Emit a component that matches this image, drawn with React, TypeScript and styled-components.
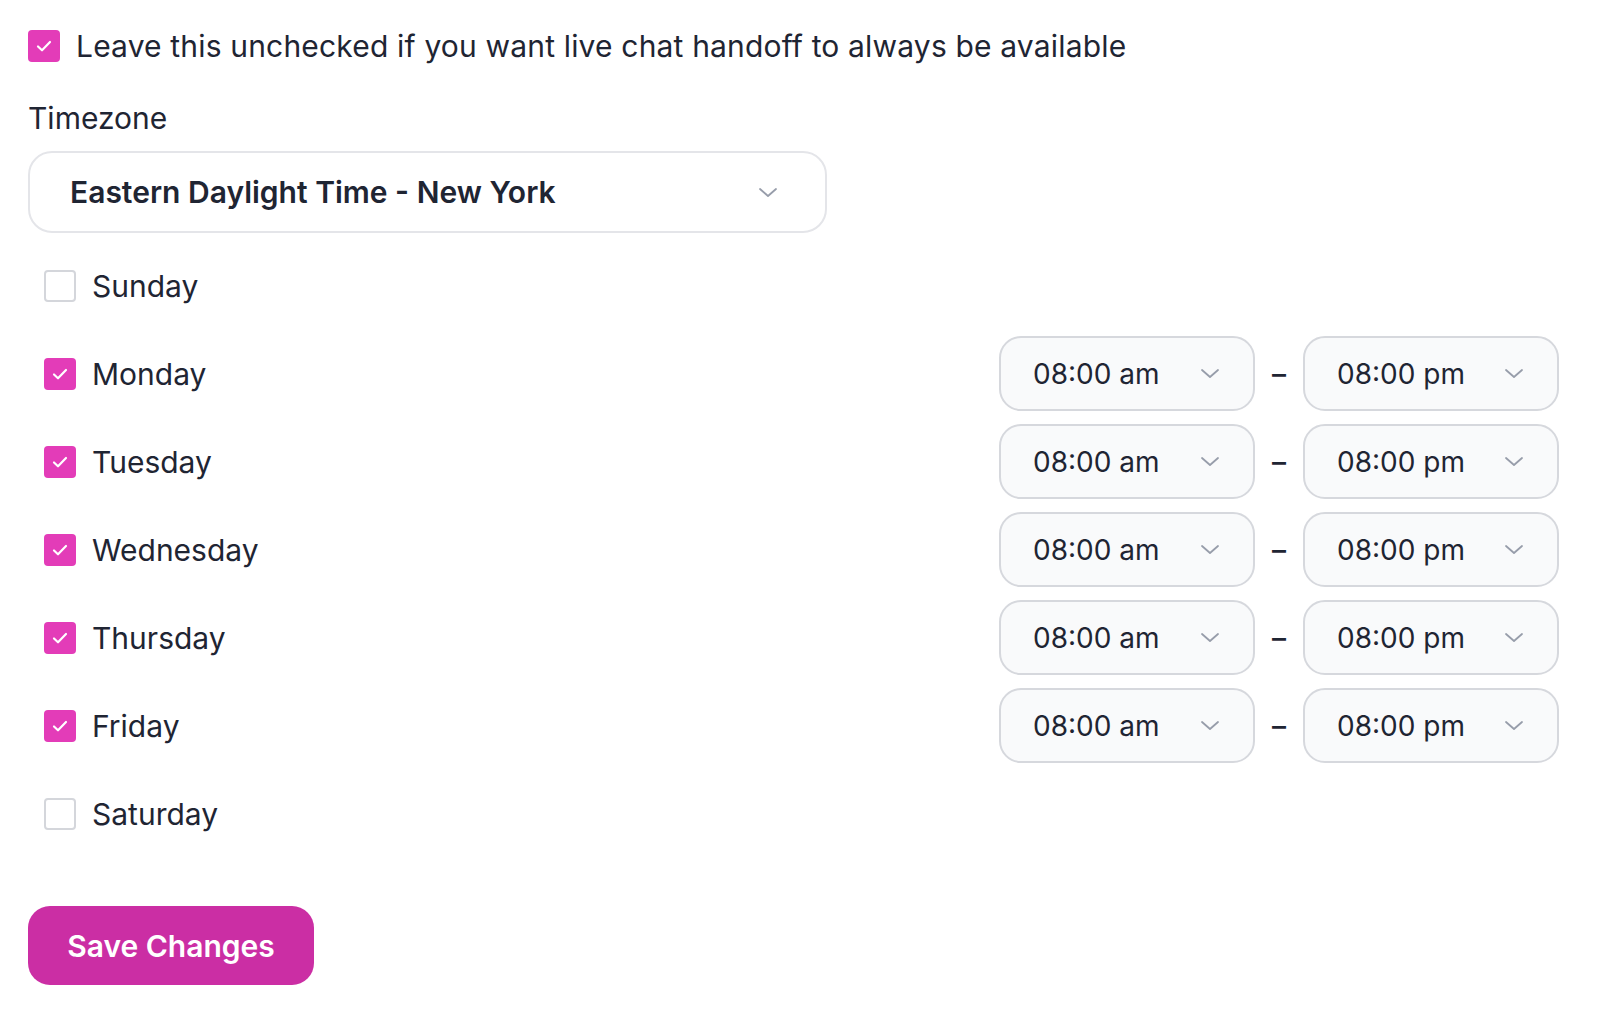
import styled, { createGlobalStyle } from 'styled-components';

const GlobalStyle = createGlobalStyle`
	body {
		margin: 0;
		background: #ffffff;
		font-family: Inter, 'Liberation Sans', sans-serif;
		color: #1f2533;
	}
`;

const days = [
	{ name: 'Sunday', on: false },
	{ name: 'Monday', on: true },
	{ name: 'Tuesday', on: true },
	{ name: 'Wednesday', on: true },
	{ name: 'Thursday', on: true },
	{ name: 'Friday', on: true },
	{ name: 'Saturday', on: false },
];

const Chevron = ({ size = 18 }: { size?: number }) => (
	<svg width={size} height={size / 2} viewBox='0 0 18 9' fill='none'>
		<path d='M1 1l8 7 8-7' stroke='#979daa' strokeWidth='1.8' strokeLinecap='round' strokeLinejoin='round' />
	</svg>
);

const Check = ({ checked }: { checked: boolean }) => (
	<CheckBox checked={checked}>
		{checked && (
			<svg width='16' height='12' viewBox='0 0 16 12' fill='none'>
				<path d='M2 6.5l4 3.8L14 2' stroke='#ffffff' strokeWidth='2.2' strokeLinecap='round' strokeLinejoin='round' />
			</svg>
		)}
	</CheckBox>
);

const TimeSelect = ({ value }: { value: string }) => (
	<TimeBox>
		<span>{value}</span>
		<Chevron />
	</TimeBox>
);

const App = () => {
	return (
		<>
			<GlobalStyle />
			<Page>
				<TopRow>
					<Check checked />
					<span>Leave this unchecked if you want live chat handoff to always be available</span>
				</TopRow>
				<FieldLabel>Timezone</FieldLabel>
				<ZoneSelect>
					<span>Eastern Daylight Time - New York</span>
					<Chevron />
				</ZoneSelect>
				<DayList>
					{days.map((day) => (
						<DayRow key={day.name}>
							<DayName>
								<Check checked={day.on} />
								<span>{day.name}</span>
							</DayName>
							{day.on && (
								<Hours>
									<TimeSelect value='08:00 am' />
									<Dash>–</Dash>
									<TimeSelect value='08:00 pm' />
								</Hours>
							)}
						</DayRow>
					))}
				</DayList>
				<SaveButton>Save Changes</SaveButton>
			</Page>
		</>
	);
};

export default App;

// Styled Components
const Page = styled.div`
	width: 1547px;
	padding: 30px 0 0 28px;
	display: flex;
	flex-direction: column;
	align-items: flex-start;
`;

const CheckBox = styled.span<{ checked: boolean }>`
	width: 32px;
	height: 32px;
	box-sizing: border-box;
	border-radius: 4px;
	display: inline-flex;
	align-items: center;
	justify-content: center;
	flex-shrink: 0;
	background: ${(props) => (props.checked ? '#e33cb8' : '#ffffff')};
	border: ${(props) => (props.checked ? 'none' : '2px solid #d4d6db')};
`;

const TopRow = styled.div`
	display: flex;
	align-items: center;
	gap: 16px;
	height: 32px;
	font-size: 30px;
	letter-spacing: 0.17px;
`;

const FieldLabel = styled.div`
	margin-top: 38px;
	line-height: 36px;
	font-size: 30px;
`;

const ZoneSelect = styled.div`
	margin-top: 15px;
	width: 799px;
	height: 82px;
	box-sizing: border-box;
	border: 2px solid #e4e5e9;
	border-radius: 24px;
	background: #ffffff;
	display: flex;
	align-items: center;
	justify-content: space-between;
	padding: 0 48px 0 40px;
	font-size: 30px;
	font-weight: 600;
`;

const DayList = styled.div`
	margin-top: 15px;
	width: 100%;
	display: flex;
	flex-direction: column;
	gap: 13px;
`;

const DayRow = styled.div`
	height: 75px;
	padding: 0 16px;
	display: flex;
	align-items: center;
	justify-content: space-between;
`;

const DayName = styled.div`
	display: flex;
	align-items: center;
	gap: 16px;
	font-size: 30px;
`;

const Hours = styled.div`
	display: flex;
	align-items: center;
	gap: 17px;
`;

const TimeBox = styled.div`
	width: 256px;
	height: 75px;
	box-sizing: border-box;
	border: 2px solid #d6d8dd;
	border-radius: 22px;
	background: #f9fafb;
	display: flex;
	align-items: center;
	justify-content: space-between;
	padding: 0 34px 0 32px;
	font-size: 28px;
`;

const Dash = styled.span`
	font-size: 28px;
	font-weight: 500;
	color: #1f2533;
`;

const SaveButton = styled.button`
	margin-top: 55px;
	width: 286px;
	height: 79px;
	border: none;
	border-radius: 22px;
	background: #cb2ea4;
	color: #ffffff;
	font-family: Inter, 'Liberation Sans', sans-serif;
	font-size: 30px;
	font-weight: 600;
	cursor: pointer;
`;
